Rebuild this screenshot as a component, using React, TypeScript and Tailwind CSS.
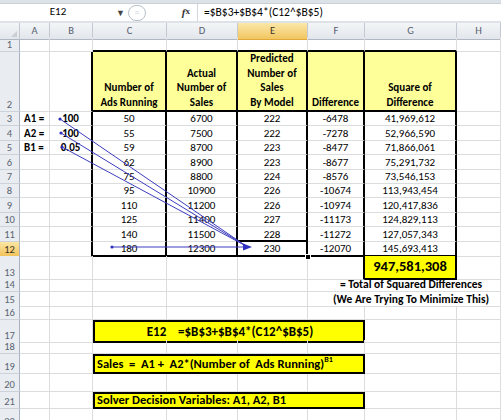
import React from "react";

const G = "grid grid-cols-[20px_30px_43px_74px_71px_70px_57px_92px_44px]";

type Bd = "g" | "k" | "n";

function C({
  r = "g",
  b = "g",
  cn = "",
  children,
}: {
  r?: Bd;
  b?: Bd;
  cn?: string;
  children?: React.ReactNode;
}) {
  const rc =
    r === "k" ? "border-r-2 border-r-black" : r === "n" ? "" : "border-r border-r-[#dadcdd]";
  const bc =
    b === "k" ? "border-b-2 border-b-black" : b === "n" ? "" : "border-b border-b-[#dadcdd]";
  return <div className={`${rc} ${bc} ${cn}`}>{children}</div>;
}

function RH({ n, sel = false }: { n: number; sel?: boolean }) {
  return (
    <div
      className={`border-r border-r-[#a9b3bf] border-b border-b-[#cdd2d8] flex items-end justify-center text-[10.5px] leading-[13px] ${
        sel
          ? "bg-linear-to-b from-[#fbe6a2] to-[#f2c35b] text-[#3d3420]"
          : "bg-[#e9ecf0] text-[#5a6472]"
      }`}
    >
      {n}
    </div>
  );
}

const data: string[][] = [
  ["A1 =", "100", "50", "6700", "222", "-6478", "41,969,612"],
  ["A2 =", "100", "55", "7500", "222", "-7278", "52,966,590"],
  ["B1 =", "0.05", "59", "8700", "223", "-8477", "71,866,061"],
  ["", "", "62", "8900", "223", "-8677", "75,291,732"],
  ["", "", "75", "8800", "224", "-8576", "73,546,153"],
  ["", "", "95", "10900", "226", "-10674", "113,943,454"],
  ["", "", "110", "11200", "226", "-10974", "120,417,836"],
  ["", "", "125", "11400", "227", "-11173", "124,829,113"],
  ["", "", "140", "11500", "228", "-11272", "127,057,343"],
  ["", "", "180", "12300", "230", "-12070", "145,693,413"],
];

const cellC = "flex items-end justify-center leading-[13px]";

function DataRow({ i }: { i: number }) {
  const d = data[i];
  const n = i + 3;
  const last = n === 12;
  return (
    <div className={`${G} h-[14.4px]`}>
      <RH n={n} sel={last} />
      <C cn="font-bold pl-[4px] flex items-end leading-[13px]">{d[0]}</C>
      <C r="k" cn={`font-bold ${cellC}`}>{d[1]}</C>
      <C r="k" b={last ? "k" : "g"} cn={cellC}>{d[2]}</C>
      <C r="k" b={last ? "k" : "g"} cn={cellC}>{d[3]}</C>
      <C r="k" b={last ? "k" : "g"} cn={`${cellC} relative`}>
        {d[4]}
        {last && (
          <>
            <div className="absolute left-[-2px] top-[-2px] right-[-2px] bottom-[-2px] border-2 border-black pointer-events-none" />
            <div className="absolute right-[-5px] bottom-[-5px] w-[6px] h-[6px] bg-black border border-white" />
          </>
        )}
      </C>
      <C r="k" b={last ? "k" : "g"} cn={cellC}>{d[5]}</C>
      <C r="k" b={last ? "k" : "g"} cn={cellC}>{d[6]}</C>
      <C />
    </div>
  );
}

function EmptyCells() {
  return (
    <>
      {[1, 2, 3, 4, 5, 6, 7, 8].map((k) => (
        <C key={k} />
      ))}
    </>
  );
}

function ColHead({ t, sel = false }: { t: string; sel?: boolean }) {
  return (
    <div
      className={`border-r border-r-[#c3c9d1] border-b flex items-center justify-center text-[10.5px] ${
        sel
          ? "bg-linear-to-b from-[#fbe8a8] to-[#f2c55e] border-b-[#e0a93a] text-[#3d3420]"
          : "bg-linear-to-b from-[#f3f5f7] to-[#e2e6eb] border-b-[#aeb7c2] text-[#56606e]"
      }`}
    >
      {t}
    </div>
  );
}

const hdr = "flex items-end justify-center text-center font-bold leading-[14.5px] bg-[#ffff99]";

export default function App() {
  return (
    <div className="relative w-[501px] h-[420px] overflow-hidden bg-white text-black text-[11px] font-['Carlito','Lato',sans-serif]">
      {/* formula bar */}
      <div className="h-[23px] bg-[#dde2e8] pt-[3px] pb-[2px]">
        <div className="h-full bg-white flex items-center text-[11px] border-t border-t-[#c9d0d8]">
          <div className="w-[116px] text-center">E12</div>
          <div className="w-[12px] text-[9px] text-[#444] leading-none">▼</div>
          <div className="w-[22px] h-full flex items-center">
            <div className="w-[18px] h-[16px] rounded-full border border-[#b7bfc9] flex items-center justify-center text-[10px] text-[#c6ccd3]">
              =
            </div>
          </div>
          <div className="w-[47px] flex justify-end pr-[7px] italic font-bold text-[11px] font-['Liberation_Serif',serif] text-[#333]">
            f<span className="text-[9px] not-italic relative top-[1px]">x</span>
          </div>
          <div className="w-[1px] h-full bg-[#d0d6dc]" />
          <div className="pl-[6px] text-[11.5px]">=$B$3+$B$4*(C12^$B$5)</div>
        </div>
      </div>

      {/* column header */}
      <div className={`${G} h-[14px]`}>
        <div className="border-r border-r-[#c3c9d1] border-b border-b-[#aeb7c2] bg-linear-to-b from-[#f3f5f7] to-[#e2e6eb] relative">
          <div className="absolute right-[2px] bottom-[2px] w-0 h-0 border-l-[6px] border-l-transparent border-b-[6px] border-b-[#c9ced4]" />
        </div>
        <ColHead t="A" />
        <ColHead t="B" />
        <ColHead t="C" />
        <ColHead t="D" />
        <ColHead t="E" sel />
        <ColHead t="F" />
        <ColHead t="G" />
        <ColHead t="H" />
      </div>

      {/* row 1 */}
      <div className={`${G} h-[15px]`}>
        <RH n={1} />
        <C />
        <C />
        <C b="k" />
        <C b="k" />
        <C b="k" />
        <C b="k" />
        <C b="k" />
        <C />
      </div>

      {/* row 2 */}
      <div className={`${G} h-[60px]`}>
        <RH n={2} />
        <C />
        <C r="k" />
        <C r="k" b="k" cn={hdr}>
          Number of
          <br />
          Ads Running
        </C>
        <C r="k" b="k" cn={hdr}>
          Actual
          <br />
          Number of
          <br />
          Sales
        </C>
        <C r="k" b="k" cn={hdr}>
          Predicted
          <br />
          Number of
          <br />
          Sales
          <br />
          By Model
        </C>
        <C r="k" b="k" cn={hdr}>
          Difference
        </C>
        <C r="k" b="k" cn={hdr}>
          Square of
          <br />
          Difference
        </C>
        <C />
      </div>

      {data.map((_, i) => (
        <DataRow key={i} i={i} />
      ))}

      {/* row 13 */}
      <div className={`${G} h-[21px]`}>
        <RH n={13} />
        <C />
        <C />
        <C />
        <C />
        <C />
        <C r="k" />
        <C r="k" b="k" cn="bg-[#ffff00] flex items-center justify-center font-bold text-[14.5px]">
          947,581,308
        </C>
        <C />
      </div>

      {/* row 14 */}
      <div className={`${G} h-[15px]`}>
        <RH n={14} />
        <C />
        <C />
        <C />
        <C />
        <C />
        <C r="n" />
        <C r="n" cn="flex items-end justify-center font-bold text-[11.5px] leading-[14px] whitespace-nowrap">
          = Total of Squared Differences
        </C>
        <C />
      </div>

      {/* row 15 */}
      <div className={`${G} h-[14px]`}>
        <RH n={15} />
        <C />
        <C />
        <C />
        <C />
        <C />
        <C r="n" />
        <C r="n" cn="flex items-end justify-center font-bold text-[11.5px] leading-[14px] whitespace-nowrap">
          (We Are Trying To Minimize This)
        </C>
        <C />
      </div>

      {/* row 16 */}
      <div className={`${G} h-[14px]`}>
        <RH n={16} />
        <EmptyCells />
      </div>

      {/* row 17 */}
      <div className={`${G} h-[20px]`}>
        <RH n={17} />
        <C />
        <C />
        <div className="col-span-4 border-2 border-black bg-[#ffff00] flex items-center justify-center font-bold text-[13px] whitespace-pre pl-[2px]">
          {"E12    =$B$3+$B$4*(C12^$B$5)"}
        </div>
        <C />
        <C />
      </div>

      {/* row 18 */}
      <div className={`${G} h-[14px]`}>
        <RH n={18} />
        <EmptyCells />
      </div>

      {/* row 19 */}
      <div className={`${G} h-[20px]`}>
        <RH n={19} />
        <C />
        <C />
        <div className="col-span-4 border-2 border-black bg-[#ffff00] flex items-center font-bold text-[12.5px] whitespace-pre pl-[2px] leading-none">
          {"Sales  =  A1 +  A2*(Number of  Ads Running)"}
          <span className="text-[8px] relative top-[-5px]">B1</span>
        </div>
        <C />
        <C />
      </div>

      {/* row 20 */}
      <div className={`${G} h-[18px]`}>
        <RH n={20} />
        <EmptyCells />
      </div>

      {/* row 21 */}
      <div className={`${G} h-[17px]`}>
        <RH n={21} />
        <C />
        <C />
        <div className="col-span-4 border-2 border-black bg-[#ffff00] flex items-center font-bold text-[12.5px] whitespace-pre pl-[2px] leading-none">
          Solver Decision Variables: A1, A2, B1
        </div>
        <C />
        <C />
      </div>

      {/* row 22 */}
      <div className={`${G} h-[20px]`}>
        <RH n={22} />
        <EmptyCells />
      </div>

      {/* trace precedent arrows */}
      <svg
        className="absolute left-0 top-0 pointer-events-none"
        width="501"
        height="420"
        viewBox="0 0 501 420"
      >
        <g stroke="#3d3dbf" strokeWidth="1" fill="none">
          <line x1="60" y1="119" x2="246" y2="246" />
          <line x1="61" y1="133" x2="246" y2="246" />
          <line x1="62" y1="147" x2="246" y2="246" />
          <line x1="112" y1="247" x2="246" y2="247" />
        </g>
        <g fill="#3030c0">
          <circle cx="60" cy="119" r="1.6" />
          <circle cx="61" cy="133" r="1.6" />
          <circle cx="62" cy="147" r="1.6" />
          <circle cx="112" cy="247" r="1.6" />
          <polygon points="243,243.5 252,247 243,250.5" />
        </g>
      </svg>
    </div>
  );
}
